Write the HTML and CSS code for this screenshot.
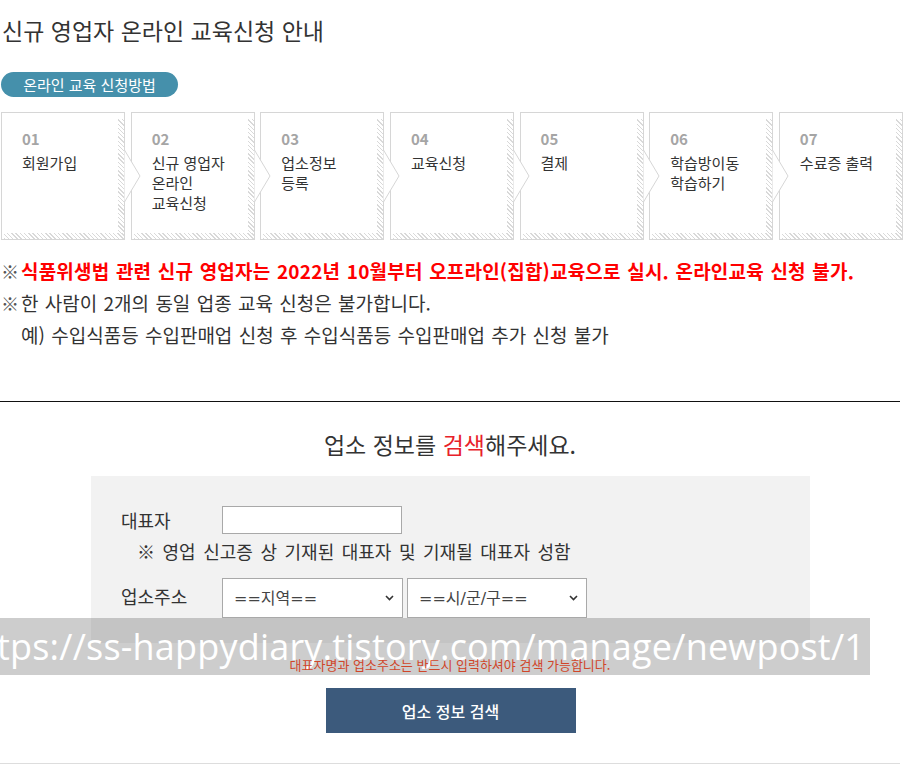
FILE: index.html
```html
<!DOCTYPE html>
<html lang="ko">
<head>
<meta charset="utf-8">
<title>신규 영업자 온라인 교육신청 안내</title>
<link rel="stylesheet" href="styles.css">
</head>
<body>
<div class="page">
  <h1 class="title">신규 영업자 온라인 교육신청 안내</h1>
  <div class="badge">온라인 교육 신청방법</div>

  <ol class="steps">
    <li class="step"><span class="num">01</span><span class="label">회원가입</span><svg class="arrow" width="17" height="52" viewBox="0 0 17 52"><path d="M0.5 0 L16 26 L0.5 52" fill="#fff" stroke="#d6d6d6"/></svg></li>
    <li class="step"><span class="num">02</span><span class="label">신규 영업자<br>온라인<br>교육신청</span><svg class="arrow" width="17" height="52" viewBox="0 0 17 52"><path d="M0.5 0 L16 26 L0.5 52" fill="#fff" stroke="#d6d6d6"/></svg></li>
    <li class="step"><span class="num">03</span><span class="label">업소정보<br>등록</span><svg class="arrow" width="17" height="52" viewBox="0 0 17 52"><path d="M0.5 0 L16 26 L0.5 52" fill="#fff" stroke="#d6d6d6"/></svg></li>
    <li class="step"><span class="num">04</span><span class="label">교육신청</span><svg class="arrow" width="17" height="52" viewBox="0 0 17 52"><path d="M0.5 0 L16 26 L0.5 52" fill="#fff" stroke="#d6d6d6"/></svg></li>
    <li class="step"><span class="num">05</span><span class="label">결제</span><svg class="arrow" width="17" height="52" viewBox="0 0 17 52"><path d="M0.5 0 L16 26 L0.5 52" fill="#fff" stroke="#d6d6d6"/></svg></li>
    <li class="step"><span class="num">06</span><span class="label">학습방이동<br>학습하기</span><svg class="arrow" width="17" height="52" viewBox="0 0 17 52"><path d="M0.5 0 L16 26 L0.5 52" fill="#fff" stroke="#d6d6d6"/></svg></li>
    <li class="step"><span class="num">07</span><span class="label">수료증 출력</span></li>
  </ol>

  <div class="notes">
    <p class="note warn"><span class="mark">※</span><strong>식품위생법 관련 신규 영업자는 2022년 10월부터 오프라인(집합)교육으로 실시. 온라인교육 신청 불가.</strong></p>
    <p class="note"><span class="mark">※</span>한 사람이 2개의 동일 업종 교육 신청은 불가합니다.</p>
    <p class="note indent">예) 수입식품등 수입판매업 신청 후 수입식품등 수입판매업 추가 신청 불가</p>
  </div>

  <section class="search">
    <h2 class="search-title">업소 정보를 <em>검색</em>해주세요.</h2>
    <div class="form-box">
      <div class="row">
        <label class="field-label" for="ceo">대표자</label>
        <input class="text-input" id="ceo" type="text">
      </div>
      <p class="hint">※ 영업 신고증 상 기재된 대표자 및 기재될 대표자 성함</p>
      <div class="row addr">
        <label class="field-label">업소주소</label>
        <span class="select-wrap wide">
          <select class="select"><option>==지역==</option></select>
          <svg class="caret" width="9" height="6" viewBox="0 0 9 6"><path d="M1 1 L4.5 4.5 L8 1" fill="none" stroke="#333" stroke-width="1.6"/></svg>
        </span>
        <span class="select-wrap">
          <select class="select"><option>==시/군/구==</option></select>
          <svg class="caret" width="9" height="6" viewBox="0 0 9 6"><path d="M1 1 L4.5 4.5 L8 1" fill="none" stroke="#333" stroke-width="1.6"/></svg>
        </span>
      </div>
    </div>
    <p class="required">대표자명과 업소주소는 반드시 입력하셔야 검색 가능합니다.</p>
    <div class="btn-row"><button class="search-btn" type="button">업소 정보 검색</button></div>
  </section>
</div>
<div class="url-overlay">tps://ss-happydiary.tistory.com/manage/newpost/1</div>
</body>
</html>
```

FILE: styles.css
```css
* { box-sizing: border-box; }
html, body { margin: 0; padding: 0; background: #fff; }
body {
  font-family: "Noto Sans CJK KR", "Noto Sans", sans-serif;
  color: #333;
  position: relative;
  width: 906px;
  min-height: 764px;
  overflow: hidden;
}
.page { width: 903px; padding-left: 1px; }

.title {
  margin: 14px 0 26px 1px;
  font-size: 23px;
  line-height: 32px;
  font-weight: 400;
  color: #333;
}
.badge {
  width: 177px;
  height: 25px;
  line-height: 25px;
  border-radius: 13px;
  background: #4590ab;
  color: #fff;
  font-size: 15px;
  text-align: center;
  margin-bottom: 15px;
}

.steps {
  list-style: none;
  margin: 0;
  padding: 0;
  display: grid;
  grid-template-columns: repeat(7, 1fr);
  column-gap: 5.5px;
}
.step {
  position: relative;
  height: 128px;
  border: 1px solid #d6d6d6;
  padding: 16px 0 0 20px;
  display: flex;
  flex-direction: column;
  background:
    repeating-linear-gradient(45deg, #d9d9d9 0 1px, transparent 1px 3px) right 0 top 6px / 6px calc(100% - 6px) no-repeat,
    repeating-linear-gradient(45deg, #d9d9d9 0 1px, transparent 1px 3px) left 2px bottom 0 / calc(100% - 2px) 6px no-repeat,
    #fff;
}
.num {
  font-size: 15px;
  line-height: 20px;
  font-weight: 700;
  color: #a5a5a5;
}
.label {
  margin-top: 4px;
  font-size: 15px;
  line-height: 20px;
  color: #333;
}
.arrow {
  position: absolute;
  left: 100%;
  top: 37px;
  z-index: 1;
}

.notes { margin-top: 15px; }
.note {
  margin: 0;
  font-size: 19px;
  line-height: 32px;
  color: #333;
  white-space: nowrap;
  word-spacing: 1px;
}
.mark {
  display: inline-block;
  width: 20px;
  font-size: 18px;
  color: #555;
  font-weight: 400;
}
.warn strong { color: #f00; font-weight: 700; letter-spacing: 0.2px; }
.indent { padding-left: 20px; }

.search {
  margin-top: 50px;
  border-top: 1px solid #111;
  border-bottom: 1px solid #ddd;
  width: 900px;
  margin-left: -1px;
  padding-bottom: 30px;
}
.search-title {
  margin: 26px 0 16px;
  text-align: center;
  font-size: 23px;
  line-height: 32px;
  font-weight: 400;
  color: #333;
}
.search-title em { font-style: normal; color: #e8212a; }

.form-box {
  margin-left: 91px;
  width: 719px;
  background: #f2f2f2;
  padding: 30px 0 25px 30px;
}
.row { display: flex; align-items: center; }
.field-label {
  width: 101px;
  font-size: 18px;
  line-height: 24px;
  color: #333;
}
.text-input {
  width: 180px;
  height: 28px;
  border: 1px solid #a9a9a9;
  background: #fff;
  margin: 0;
  padding: 0 4px;
}
.hint {
  margin: 5px 0 0 16px;
  font-size: 18px;
  line-height: 24px;
  word-spacing: 2.5px;
  color: #333;
}
.addr { margin-top: 15px; gap: 4px; align-items: flex-start; }
.addr .field-label { margin-top: 6px; margin-right: -4px; }
.select-wrap { position: relative; display: block; width: 180px; height: 40px; }
.select-wrap.wide { width: 181px; }
.select {
  appearance: none;
  -webkit-appearance: none;
  width: 100%;
  height: 40px;
  border: 1px solid #a9a9a9;
  border-radius: 0;
  background: #fff;
  padding: 0 0 0 11px;
  font-family: "DejaVu Sans", "Noto Sans CJK KR", sans-serif;
  font-size: 16px;
  color: #444;
  margin: 0;
}
.caret { position: absolute; right: 9px; top: 17px; pointer-events: none; }

.required {
  position: relative;
  z-index: 3;
  margin: 14px 0 0;
  text-align: center;
  font-size: 13px;
  line-height: 16px;
  color: #d0462a;
}
.btn-row { display: flex; justify-content: center; margin-top: 15px; }
.search-btn {
  width: 250px;
  height: 45px;
  border: 0;
  background: #3c5a7c;
  color: #fff;
  font-family: "Noto Sans CJK KR", sans-serif;
  font-size: 16px;
  font-weight: 500;
  margin-left: 1px;
}

.url-overlay {
  position: absolute;
  left: 0;
  top: 618px;
  width: 870px;
  height: 57px;
  background: rgba(90, 90, 90, 0.3);
  color: #fff;
  font-family: "Open Sans", "DejaVu Sans", sans-serif;
  font-size: 36px;
  letter-spacing: 0.2px;
  line-height: 57px;
  white-space: nowrap;
  overflow: hidden;
  text-indent: -3px;
  z-index: 2;
}
```
